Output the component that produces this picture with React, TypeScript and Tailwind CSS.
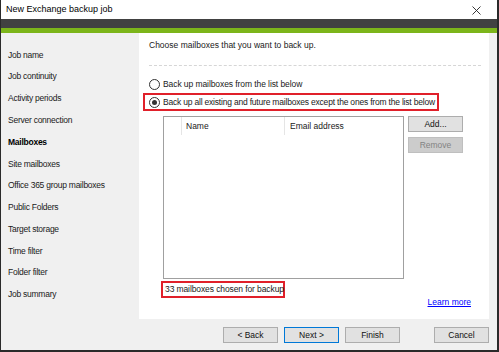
import React from "react";

const navItems = [
  "Job name",
  "Job continuity",
  "Activity periods",
  "Server connection",
  "Mailboxes",
  "Site mailboxes",
  "Office 365 group mailboxes",
  "Public Folders",
  "Target storage",
  "Time filter",
  "Folder filter",
  "Job summary",
];

function Radio({ checked }: { checked?: boolean }) {
  return (
    <span className="w-[11px] h-[11px] rounded-full border border-[#333333] bg-white flex items-center justify-center shrink-0">
      {checked && <span className="w-[5px] h-[5px] rounded-full bg-[#333333]" />}
    </span>
  );
}

function Btn({ children, disabled, focused, className = "" }: { children: React.ReactNode; disabled?: boolean; focused?: boolean; className?: string }) {
  return (
    <div
      className={
        "h-[16px] w-[55px] flex items-center justify-center text-[8.5px] leading-none border " +
        (disabled
          ? "bg-[#cccccc] border-[#bfbfbf] text-[#838383] "
          : focused
          ? "bg-[#e1e1e1] border-[#0078d7] text-[#111] "
          : "bg-[#e1e1e1] border-[#adadad] text-[#111] ") +
        className
      }
    >
      {children}
    </div>
  );
}

export default function App() {
  return (
    <div
      className="w-[499px] h-[352px] flex flex-col bg-white border-l border-r-2 border-b-2 border-[#2a2a2a] text-[#1a1a1a]"
      style={{ fontFamily: '"Liberation Sans", Arial, sans-serif' }}
    >
      {/* Title bar */}
      <div className="h-[19px] flex items-center justify-between bg-white pl-[5px] pr-[16px]">
        <span className="text-[9px] text-black">New Exchange backup job</span>
        <svg width="9" height="9" viewBox="0 0 9 9" className="mt-[1px]">
          <path d="M0.5 0.5 L8.5 8.5 M8.5 0.5 L0.5 8.5" stroke="#222" strokeWidth="0.9" />
        </svg>
      </div>
      <div className="h-[9px] bg-[#414141]" />
      <div className="h-[5px] bg-[#7cb51a]" />

      <div className="flex-1 flex min-h-0">
        {/* Nav */}
        <div className="w-[138px] bg-[#f0f0f0] pt-[11px] pl-[7px] flex flex-col">
          {navItems.map((n) => (
            <div
              key={n}
              className={"h-[21.8px] flex items-center text-[8.5px] tracking-[-0.25px] whitespace-nowrap " + (n === "Mailboxes" ? "font-bold text-black" : "")}
            >
              {n}
            </div>
          ))}
        </div>

        {/* Right */}
        <div className="flex-1 flex flex-col bg-[#f0f0f0]">
          <div className="flex-1 flex">
            <div className="flex-1 bg-white flex flex-col pl-[10px] pr-[8px] pt-[7px] text-[8.5px] whitespace-nowrap">
              <div className="h-[10px] flex items-center">Choose mailboxes that you want to back up.</div>
              <div className="mt-[15px] border-t border-dashed border-[#d6d6d6]" />
              <div className="mt-[12px] flex items-center gap-[3px] h-[12px] tracking-[-0.08px]">
                <Radio />
                <span>Back up mailboxes from the list below</span>
              </div>
              <div className="mt-[3px] -ml-[6px] w-[296px] h-[18px] border-2 border-[#e0202a] flex items-center pl-[4px] gap-[3px] tracking-[-0.2px]">
                <Radio checked />
                <span>Back up all existing and future mailboxes except the ones from the list below</span>
              </div>
              <div className="mt-[5px] flex">
                <div className="ml-[14px] w-[241px] h-[163px] border border-[#a0a0a0] bg-white flex flex-col">
                  <div className="h-[18px] flex text-[8.5px]">
                    <div className="w-[18px] border-r border-[#e5e5e5]" />
                    <div className="w-[103px] border-r border-[#e5e5e5] pl-[4px] flex items-center">Name</div>
                    <div className="pl-[5px] flex items-center">Email address</div>
                  </div>
                </div>
                <div className="ml-[4px] flex flex-col gap-[5px]">
                  <Btn>Add...</Btn>
                  <Btn disabled>Remove</Btn>
                </div>
              </div>
              <div className="mt-[2px] ml-[12px] w-[124px] h-[17px] border-2 border-[#e0202a] flex items-center pl-[2px] tracking-[-0.1px]">
                33 mailboxes chosen for backup
              </div>
              <div className="-mt-[2px] flex justify-end pr-[10px]">
                <span className="text-[#0000ff] underline">Learn more</span>
              </div>
            </div>
            <div className="w-[8px] bg-[#f0f0f0]" />
          </div>
          <div className="h-[31px] flex items-center pt-[1px]">
            <div className="ml-[84px] flex gap-[6px]">
              <Btn>&lt; Back</Btn>
              <Btn focused>Next &gt;</Btn>
              <Btn>Finish</Btn>
            </div>
            <Btn className="ml-[34px]">Cancel</Btn>
          </div>
        </div>
      </div>
    </div>
  );
}
